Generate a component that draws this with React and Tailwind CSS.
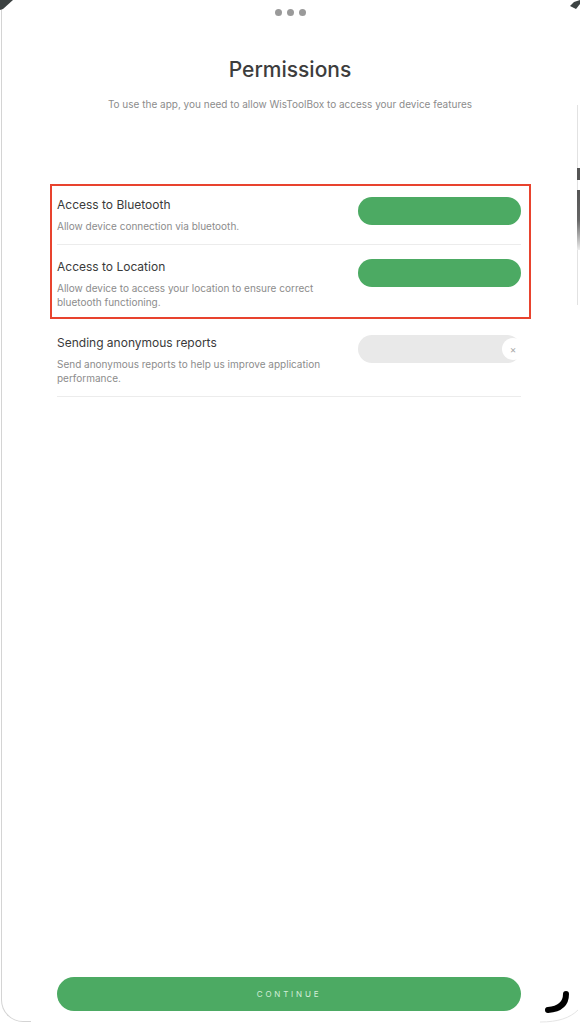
import React from 'react';

const permissions = [
  {
    title: 'Access to Bluetooth',
    desc: 'Allow device connection via bluetooth.',
    enabled: true,
  },
  {
    title: 'Access to Location',
    desc: 'Allow device to access your location to ensure correct bluetooth functioning.',
    enabled: true,
  },
];

const Toggle = ({ enabled }) =>
  enabled ? (
    <div className="w-[163px] h-[28px] rounded-full bg-[#4caa63] shrink-0" />
  ) : (
    <div className="w-[163px] h-[28px] rounded-full bg-[#e9e9e9] shrink-0 flex items-center justify-end">
      <div className="w-[22px] h-[22px] -mr-[3px] rounded-full bg-white flex items-center justify-center text-[10px] leading-none text-[#a8a8a8]">
        ×
      </div>
    </div>
  );

const PermissionRow = ({ title, desc, enabled }) => (
  <div className="flex justify-between items-start">
    <div className="w-[280px]">
      <p className="text-[12px] leading-[16px] text-[#3a3a3a]">{title}</p>
      <p className="mt-[6px] text-[10px] leading-[14px] text-[#8c8c8c]">{desc}</p>
    </div>
    <Toggle enabled={enabled} />
  </div>
);

export default function App() {
  return (
    <div
      className="relative w-[580px] h-[1024px] bg-white overflow-hidden"
      style={{ fontFamily: 'Inter, "Noto Sans", sans-serif' }}
    >
      {/* device frame edges */}
      <div className="absolute left-[1px] top-[8px] bottom-[2px] w-[30px] border-l border-b border-[#d4d4d4] rounded-bl-[22px]" />
      <div className="absolute right-[2px] top-[105px] h-[200px] border-r border-[#e2e2e2]" />
      <div className="absolute right-0 top-[168px] w-[3px] h-[12px] bg-[#555]" />
      <div className="absolute right-0 top-[190px] w-[3px] h-[60px] bg-gradient-to-b from-[#555] via-[#666] to-[#eee]" />
      <svg className="absolute left-0 top-0" width="16" height="12" viewBox="0 0 16 12">
        <path d="M0 0 H13 L3 9 L0 10 Z" fill="#3c4242" />
      </svg>
      <svg className="absolute right-0 top-0" width="20" height="14" viewBox="0 0 20 14">
        <path d="M20 0 V4 L16 9 L10 6 L14 2 Z" fill="#3c4242" />
      </svg>
      <svg className="absolute right-0 bottom-0" width="40" height="36" viewBox="0 0 40 36">
        <path d="M26 6 C26 16 20 21 8 22" stroke="#000" strokeWidth="6" strokeLinecap="round" fill="none" />
        <path d="M0 34 C18 34 30 30 38 22" stroke="#e5e5e5" strokeWidth="1" fill="none" />
      </svg>

      <div className="relative h-full flex flex-col">
        <div className="flex justify-center gap-[5px] mt-[9px]">
          <span className="w-[7px] h-[7px] rounded-full bg-[#9a9a9a]" />
          <span className="w-[7px] h-[7px] rounded-full bg-[#9a9a9a]" />
          <span className="w-[7px] h-[7px] rounded-full bg-[#9a9a9a]" />
        </div>

        <h1 className="mt-[40px] text-center text-[21px] leading-[28px] font-medium text-[#3d3d3d]">
          Permissions
        </h1>
        <p className="mt-[13px] text-center text-[10px] leading-[14px] text-[#8c8c8c]">
          To use the app, you need to allow WisToolBox to access your device features
        </p>

        <div className="mt-[73px] ml-[50px] w-[481px] border-2 border-[#e8432e] pl-[5px] pr-[8px]">
          {permissions.map((p, i) => (
            <div
              key={p.title}
              className={
                i === 0
                  ? 'pt-[11px] pb-[11px] border-b border-[#ececec]'
                  : 'pt-[14px] pb-[8px]'
              }
            >
              <PermissionRow {...p} />
            </div>
          ))}
        </div>

        <div className="ml-[57px] w-[464px] pt-[16px] pb-[11px] border-b border-[#ececec]">
          <PermissionRow
            title="Sending anonymous reports"
            desc="Send anonymous reports to help us improve application performance."
            enabled={false}
          />
        </div>

        <button className="mt-auto mb-[13px] ml-[57px] w-[464px] h-[34px] rounded-full bg-[#4caa63] text-[8px] tracking-[0.35em] text-[#d3eed9]">
          CONTINUE
        </button>
      </div>
    </div>
  );
}
